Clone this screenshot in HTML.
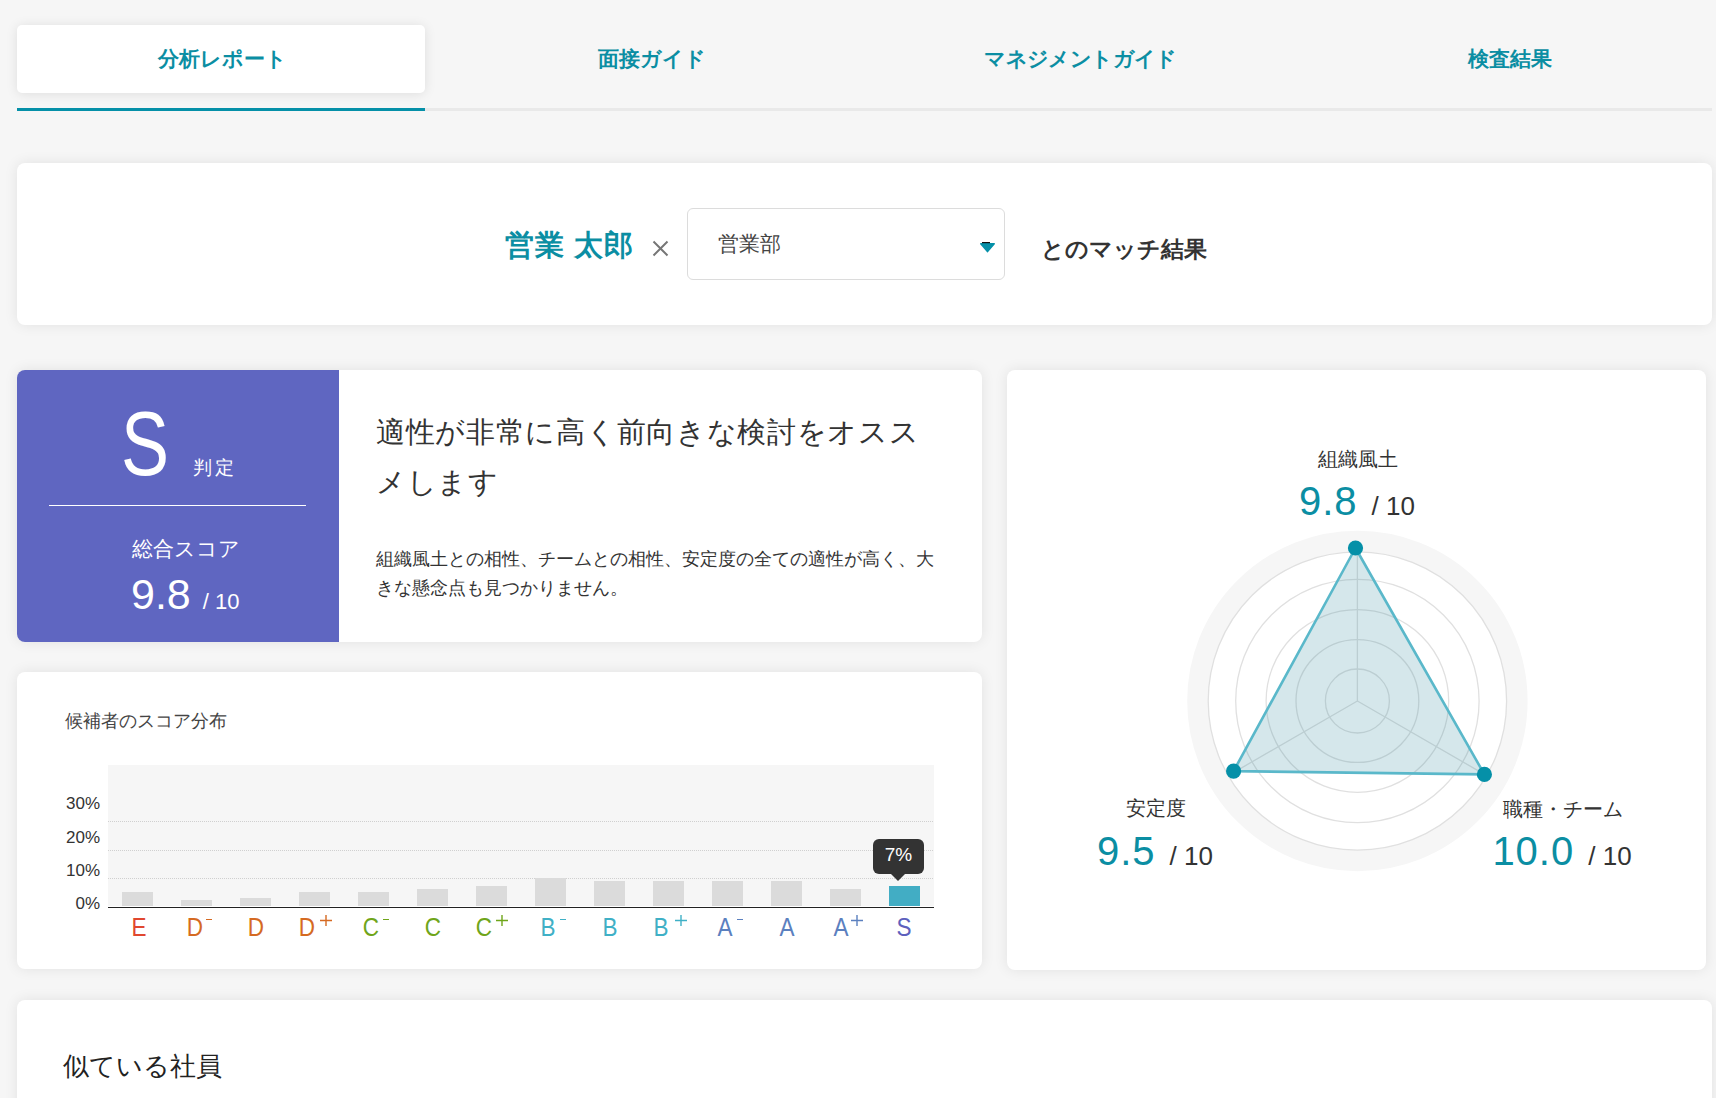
<!DOCTYPE html>
<html lang="ja">
<head>
<meta charset="utf-8">
<style>
html,body{margin:0;padding:0}
body{width:1716px;height:1098px;overflow:hidden;background:#f6f6f6;position:relative;font-family:"Liberation Sans",sans-serif;color:#333}
.a{position:absolute;white-space:nowrap}
.card{position:absolute;background:#fff;border-radius:8px;box-shadow:0 0 14px rgba(0,0,0,0.085)}
.tabt{position:absolute;top:25px;height:68px;width:408px;text-align:center;box-sizing:border-box;padding-left:3px;line-height:68px;font-size:21px;font-weight:bold;color:#0b8ea3}
.yl{position:absolute;left:40px;width:60px;text-align:right;font-size:17px;line-height:24px;color:#333}
.xl{position:absolute;top:913px;width:40px;text-align:center;font-size:25px;line-height:28px;transform:scaleX(0.9)}
.sm{display:inline-block;width:6px;height:1.5px;background:currentColor;vertical-align:top;margin-top:6px;margin-left:3px}
.sp{display:inline-block;font-size:17px;line-height:17px;vertical-align:top;margin-left:2px;margin-top:-1px}
.rl{text-align:center;font-size:20px;line-height:24px;color:#333}
.rv{text-align:center;line-height:44px;color:#333}
.big{font-size:40px;letter-spacing:1px;color:#0b8ea3}
.sm10{font-size:26px;margin-left:14px}
</style>
</head>
<body>
<!-- tabs -->
<div class="a" style="left:17px;top:25px;width:408px;height:68px;background:#fff;border-radius:5px;box-shadow:0 1px 12px rgba(0,0,0,0.1)"></div>
<div class="tabt" style="left:17px">分析レポート</div>
<div class="tabt" style="left:446px">面接ガイド</div>
<div class="tabt" style="left:875px;letter-spacing:-0.6px">マネジメントガイド</div>
<div class="tabt" style="left:1304px">検査結果</div>
<div class="a" style="left:17px;top:108px;width:1695px;height:3px;background:#e9e9e9"></div>
<div class="a" style="left:17px;top:108px;width:408px;height:3px;background:#0590a8"></div>

<!-- match card -->
<div class="card" style="left:17px;top:163px;width:1695px;height:162px"></div>
<div class="a" id="name" style="left:505px;top:229px;font-size:29px;line-height:32px;font-weight:bold;letter-spacing:1px;color:#0b8ea3">営業 太郎</div>
<svg class="a" id="times" style="left:652px;top:240px" width="17" height="17"><path d="M1.5 1.5L15.5 15.5M15.5 1.5L1.5 15.5" stroke="#767676" stroke-width="2"/></svg>
<div class="a" style="left:687px;top:208px;width:316px;height:70px;border:1px solid #dcdcdc;border-radius:6px;background:#fff"></div>
<div class="a" id="dept" style="left:718px;top:232px;font-size:21px;line-height:24px;color:#444">営業部</div>
<svg class="a" style="left:978px;top:240px" width="20" height="14"><path d="M2.8 3.8 H16.2 L9.5 11.6 Z" fill="#0590a8" stroke="#0590a8" stroke-width="1.6" stroke-linejoin="round"/><rect x="4" y="2" width="8" height="1.2" fill="#111"/></svg>
<div class="a" id="match" style="left:1041px;top:235px;font-size:23px;line-height:28px;font-weight:bold;color:#333">とのマッチ結果</div>

<!-- result card -->
<div class="card" style="left:17px;top:370px;width:965px;height:272px"></div>
<div class="a" style="left:17px;top:370px;width:322px;height:272px;background:#5f66c1;border-radius:8px 0 0 8px"></div>
<div class="a" id="bigS" style="left:121px;top:394px;font-size:90px;line-height:100px;color:#fff;transform:scaleX(0.8);transform-origin:0 0">S</div>
<div class="a" id="hantei" style="left:193px;top:456px;font-size:19px;letter-spacing:3px;line-height:24px;color:#fff">判定</div>
<div class="a" style="left:49px;top:505px;width:257px;height:1px;background:#fff"></div>
<div class="a" id="sogo" style="left:132px;top:536px;font-size:21px;line-height:26px;color:#fff">総合スコア</div>
<div class="a" id="score" style="left:131px;top:570px;font-size:43px;line-height:48px;color:#fff">9.8<span style="font-size:22px;margin-left:12px">/ 10</span></div>
<div class="a" id="head" style="left:376px;top:407px;font-size:29px;letter-spacing:0.7px;line-height:50px;color:#333;white-space:normal;width:560px">適性が非常に高く前向きな検討をオススメします</div>
<div class="a" id="para" style="left:376px;top:545px;font-size:18px;line-height:29px;color:#333;white-space:normal;width:570px">組織風土との相性、チームとの相性、安定度の全ての適性が高く、大きな懸念点も見つかりません。</div>

<!-- chart card -->
<div class="card" style="left:17px;top:672px;width:965px;height:297px"></div>
<div class="a" id="ctitle" style="left:65px;top:709px;font-size:18px;line-height:24px;color:#444">候補者のスコア分布</div>
<div class="a" style="left:108px;top:765px;width:826px;height:142px;background:#f6f6f6"></div>
<div class="a" style="left:108px;top:821px;width:826px;height:1px;background:repeating-linear-gradient(90deg,#d0d0d0 0 1px,transparent 1px 2px)"></div>
<div class="a" style="left:108px;top:850px;width:826px;height:1px;background:repeating-linear-gradient(90deg,#d0d0d0 0 1px,transparent 1px 2px)"></div>
<div class="a" style="left:108px;top:878px;width:826px;height:1px;background:repeating-linear-gradient(90deg,#d0d0d0 0 1px,transparent 1px 2px)"></div>
<div class="a" style="left:108px;top:906px;width:826px;height:1px;background:#fff"></div>
<div class="a" style="left:108px;top:907px;width:826px;height:1px;background:#222"></div>
<div class="yl" style="top:792px">30%</div>
<div class="yl" style="top:826px">20%</div>
<div class="yl" style="top:859px">10%</div>
<div class="yl" style="top:892px">0%</div>
<div class="a" style="left:122px;top:892px;width:31px;height:14px;background:#dbdbdb"></div>
<div class="a" style="left:181px;top:900px;width:31px;height:6px;background:#dbdbdb"></div>
<div class="a" style="left:240px;top:898px;width:31px;height:8px;background:#dbdbdb"></div>
<div class="a" style="left:299px;top:892px;width:31px;height:14px;background:#dbdbdb"></div>
<div class="a" style="left:358px;top:892px;width:31px;height:14px;background:#dbdbdb"></div>
<div class="a" style="left:417px;top:889px;width:31px;height:17px;background:#dbdbdb"></div>
<div class="a" style="left:476px;top:886px;width:31px;height:20px;background:#dbdbdb"></div>
<div class="a" style="left:535px;top:878px;width:31px;height:28px;background:#dbdbdb"></div>
<div class="a" style="left:594px;top:881px;width:31px;height:25px;background:#dbdbdb"></div>
<div class="a" style="left:653px;top:881px;width:31px;height:25px;background:#dbdbdb"></div>
<div class="a" style="left:712px;top:881px;width:31px;height:25px;background:#dbdbdb"></div>
<div class="a" style="left:771px;top:881px;width:31px;height:25px;background:#dbdbdb"></div>
<div class="a" style="left:830px;top:889px;width:31px;height:17px;background:#dbdbdb"></div>
<div class="a" style="left:889px;top:886px;width:31px;height:20px;background:#42adc4"></div>
<div class="xl" style="left:119.0px;color:#e0472f">E</div>
<div class="xl" style="left:174.5px;color:#d56a22">D</div>
<div class="a" style="left:206px;top:919px;width:6px;height:1.3px;background:#d56a22"></div>
<div class="xl" style="left:236.0px;color:#d56a22">D</div>
<div class="xl" style="left:287.1px;color:#d56a22">D</div>
<svg class="a" style="left:319.6px;top:915px" width="12" height="11"><path d="M0 5.5H12M6 0V11" stroke="#d56a22" stroke-width="1.4"/></svg>
<div class="xl" style="left:350.7px;color:#6fa51a">C</div>
<div class="a" style="left:383px;top:919px;width:6px;height:1.3px;background:#6fa51a"></div>
<div class="xl" style="left:412.6px;color:#6fa51a">C</div>
<div class="xl" style="left:463.6px;color:#6fa51a">C</div>
<svg class="a" style="left:496px;top:915px" width="12" height="11"><path d="M0 5.5H12M6 0V11" stroke="#6fa51a" stroke-width="1.4"/></svg>
<div class="xl" style="left:528.3px;color:#3fb0c6">B</div>
<div class="a" style="left:560px;top:919px;width:6px;height:1.3px;background:#3fb0c6"></div>
<div class="xl" style="left:590.1px;color:#3fb0c6">B</div>
<div class="xl" style="left:641.2px;color:#3fb0c6">B</div>
<svg class="a" style="left:674.6px;top:915px" width="12" height="11"><path d="M0 5.5H12M6 0V11" stroke="#3fb0c6" stroke-width="1.4"/></svg>
<div class="xl" style="left:705.2px;color:#5b80bf">A</div>
<div class="a" style="left:736.6px;top:919px;width:6px;height:1.3px;background:#5b80bf"></div>
<div class="xl" style="left:767.1px;color:#5b80bf">A</div>
<div class="xl" style="left:820.7px;color:#5b80bf">A</div>
<svg class="a" style="left:851px;top:915px" width="12" height="11"><path d="M0 5.5H12M6 0V11" stroke="#5b80bf" stroke-width="1.4"/></svg>
<div class="xl" style="left:884.2px;color:#5d60bd">S</div>
<div class="a" style="left:873px;top:839px;width:51px;height:35px;background:#333;border-radius:6px"></div>
<svg class="a" style="left:888px;top:872px" width="20" height="10"><path d="M1 0 H19 L10 9 Z" fill="#333"/></svg>
<div class="a" id="tip" style="left:873px;top:843px;width:51px;text-align:center;font-size:19px;line-height:24px;color:#fff">7%</div>

<!-- radar card -->
<div class="card" style="left:1007px;top:370px;width:699px;height:600px"></div>
<svg class="a" style="left:0;top:0" width="1716" height="1098">
<circle cx="1357.4" cy="701" r="159.7" fill="none" stroke="#f6f6f6" stroke-width="21"/>
<g fill="none" stroke="#e0e0e0" stroke-width="1.3">
<circle cx="1357.4" cy="701" r="149.2"/>
<circle cx="1357.4" cy="701" r="121.7"/>
<circle cx="1357.4" cy="701" r="91.3"/>
<circle cx="1357.4" cy="701" r="61.4"/>
<circle cx="1357.4" cy="701" r="32"/>
<path d="M1357.4 701 V551.8 M1357.4 701 L1228.2 775.6 M1357.4 701 L1486.6 775.6"/>
</g>
<polygon points="1355.5,548 1484.4,774.4 1233.6,771.1" fill="rgba(45,135,155,0.2)" stroke="#5ab8ca" stroke-width="2.6" stroke-linejoin="round"/>
<circle cx="1355.5" cy="548" r="7.6" fill="#0590a8"/>
<circle cx="1484.4" cy="774.4" r="7.6" fill="#0590a8"/>
<circle cx="1233.6" cy="771.1" r="7.6" fill="#0590a8"/>
</svg>
<div class="a rl" id="rl1" style="left:1258px;top:447px;width:200px">組織風土</div>
<div class="a rv" id="rv1" style="left:1257px;top:479px;width:200px"><span class="big">9.8</span><span class="sm10">/ 10</span></div>
<div class="a rl" id="rl2" style="left:1056px;top:796px;width:200px">安定度</div>
<div class="a rv" id="rv2" style="left:1055px;top:829px;width:200px"><span class="big">9.5</span><span class="sm10">/ 10</span></div>
<div class="a rl" id="rl3" style="left:1463px;top:797px;width:200px">職種・チーム</div>
<div class="a rv" id="rv3" style="left:1462px;top:829px;width:200px"><span class="big">10.0</span><span class="sm10">/ 10</span></div>

<!-- similar card -->
<div class="card" style="left:17px;top:1000px;width:1695px;height:200px"></div>
<div class="a" id="similar" style="left:63px;top:1050px;font-size:26px;line-height:32px;color:#222">似ている社員</div>
</body>
</html>
